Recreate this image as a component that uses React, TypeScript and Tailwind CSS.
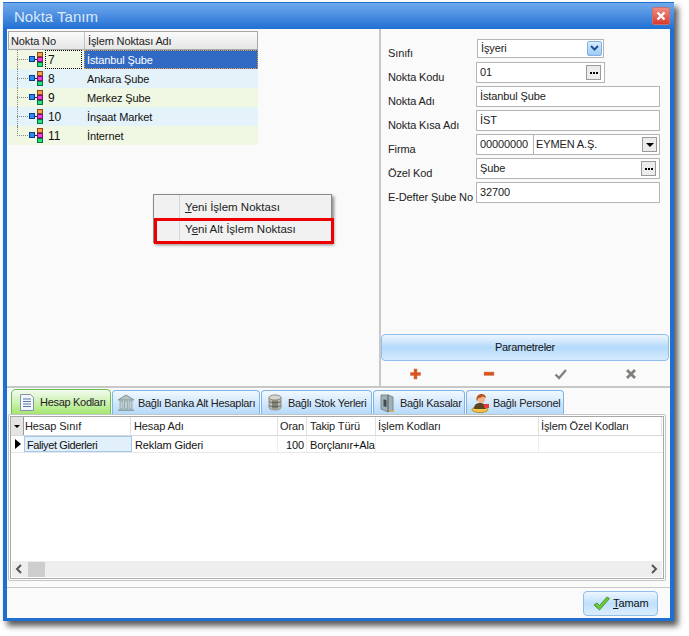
const treeRows = [
  { no: "7", name: "İstanbul Şube", bg: "bg-[#f0f8e3]" },
  { no: "8", name: "Ankara Şube", bg: "bg-[#e4f3fa]" },
  { no: "9", name: "Merkez Şube", bg: "bg-[#f0f8e3]" },
  { no: "10", name: "İnşaat Market", bg: "bg-[#e4f3fa]" },
  { no: "11", name: "İnternet", bg: "bg-[#f0f8e3]" },
];

const gridCols = [
  { label: "Hesap Sınıf", w: "w-[107px] pl-[1px]" },
  { label: "Hesap Adı", w: "w-[147px] pl-[3px]" },
  { label: "Oran", w: "w-[29px] pl-[2px]" },
  { label: "Takip Türü", w: "w-[69px] pl-[3px]" },
  { label: "İşlem Kodları", w: "w-[163px] pl-[2px]" },
  { label: "İşlem Özel Kodları", w: "w-[123px] pl-[2px]" },
];

const NodeIcon = () => (
  <svg width="14" height="15" viewBox="0 0 14 15" className="shrink-0" shapeRendering="crispEdges">
    <path d="M5 7h3v-4.500h1M8 7h1M8 7v5h1" stroke="#222" fill="none" />
    <rect x="0" y="4" width="6" height="6" fill="#123a80" />
    <rect x="1" y="5" width="4" height="4" fill="#1e90ff" />
    <rect x="8" y="0" width="6" height="5" fill="#8a4a10" />
    <rect x="9" y="1" width="4" height="3" fill="#f8a050" />
    <rect x="8" y="5" width="6" height="5" fill="#801070" />
    <rect x="9" y="6" width="4" height="3" fill="#f03cd8" />
    <rect x="8" y="10" width="6" height="5" fill="#0a7040" />
    <rect x="9" y="11" width="4" height="3" fill="#28e080" />
  </svg>
);

const DotsButton = () => (
  <span className="flex h-[15px] w-[15px] items-center justify-center gap-[1px] border border-[#9a9a9a] bg-[#ececec]">
    <i className="h-[2px] w-[2px] bg-black" />
    <i className="h-[2px] w-[2px] bg-black" />
    <i className="h-[2px] w-[2px] bg-black" />
  </span>
);

const FormRow = ({ label, children }: { label: string; children: React.ReactNode }) => (
  <div className="flex h-[24px] items-start">
    <span className="mt-[8px] w-[88px] shrink-0 whitespace-nowrap text-[#222]">{label}</span>
    {children}
  </div>
);

const Field = ({ value, w = "w-[184px]", right }: { value: string; w?: string; right?: React.ReactNode }) => (
  <div className={`flex h-[21px] ${w} items-center justify-between border border-[#b4b4b4] bg-white pl-[3px] pr-[3px] text-[#222]`}>
    <span className="-mt-[2px]">{value}</span>
    {right}
  </div>
);

const HesapIcon = () => (
  <svg width="18" height="19" viewBox="0 0 18 19" className="shrink-0">
    <path d="M2.500 1.500h10l3 3v13h-13z" fill="#f2f5fa" stroke="#8794a8" />
    <path d="M5 6h8M5 8.500h8M5 11h8M5 13.500h8" stroke="#5a7aa4" />
  </svg>
);

const BankIcon = () => (
  <svg width="18" height="18" viewBox="0 0 18 18" className="shrink-0">
    <path d="M1 6 9 1l8 5z" fill="#b4c4c4" stroke="#7f9292" />
    <path d="M3 7h3v8H3zM7.500 7h3v8h-3zM12 7h3v8h-3z" fill="#c0cfcf" stroke="#869a9a" strokeWidth="0.700" />
    <path d="M1 15.500h16V17H1z" fill="#8ba0a0" />
  </svg>
);

const StockIcon = () => (
  <svg width="16" height="17" viewBox="0 0 16 17" className="shrink-0">
    <path d="M2 3.500v10c0 1.400 2.500 2.500 6 2.500s6-1.100 6-2.500v-10z" fill="#b9bab0" stroke="#8c8d84" />
    <ellipse cx="8" cy="3.500" rx="6" ry="2.500" fill="#d6d7cf" stroke="#8c8d84" />
    <path d="M2 7.500c1 1.500 11 1.500 12 0M2 11.500c1 1.500 11 1.500 12 0" fill="none" stroke="#6c6d64" />
    <path d="M5 6.500h6v8H5z" fill="#55574f" opacity="0.550" />
  </svg>
);

const SafeIcon = () => (
  <svg width="16" height="20" viewBox="0 0 16 20" className="shrink-0">
    <path d="M1 2h7l5 2v13l-5 2-7-3z" fill="#9fb0b6" stroke="#7a8b90" />
    <path d="M8 2v17" stroke="#4f5e64" />
    <path d="M3.500 6.500 6.500 7v7l-3-.800z" fill="#3f4c52" />
    <path d="M9 17h5v2H9z" fill="#c8b070" />
  </svg>
);

const PersonIcon = () => (
  <svg width="20" height="20" viewBox="0 0 20 20" className="shrink-0">
    <ellipse cx="9" cy="16.500" rx="8" ry="3" fill="#f3c84a" stroke="#b88a20" />
    <path d="M3 16c0-4 2-6 6-6s5 2 6 6z" fill="#5c4420" />
    <circle cx="10" cy="6" r="4" fill="#f2b48a" />
    <path d="M5.500 8c-.5-5 2-7 5-7s4.500 2 4.500 4l-3-1.500c-2 1.500-4 1.500-4.500 1.500z" fill="#b5561c" />
    <path d="M13 11h5v4h-5z" fill="#e23b3b" />
  </svg>
);

const tabs = [
  { label: "Bağlı Banka Alt Hesapları", w: "w-[148px]", cls: "pl-[4px] gap-[3px]", icon: <BankIcon /> },
  { label: "Bağlı Stok Yerleri", w: "w-[111px]", cls: "pl-[5px] gap-[5px]", icon: <StockIcon /> },
  { label: "Bağlı Kasalar", w: "w-[92px]", cls: "pl-[6px] gap-[4px]", icon: <SafeIcon /> },
  { label: "Bağlı Personel", w: "w-[98px]", cls: "pl-[4px] gap-[2px]", icon: <PersonIcon /> },
];

export default function App() {
  return (
    <div className="h-[636px] w-[689px] overflow-hidden bg-white pl-[3px] pt-[2px] font-['Liberation_Sans',Arial,sans-serif] text-[11px] leading-[14px] tracking-[-0.12px]">
      <div className="relative flex h-[619px] w-[671px] flex-col border-x-[4px] border-b-[3px] border-[#1f6fd0] bg-[#fafafa] shadow-[4px_5px_6px_rgba(0,0,0,0.65)]">
        {/* Title */}
        <div className="-mx-[4px] flex h-[27px] shrink-0 items-center justify-between border-t border-[#1f6fd0] bg-gradient-to-b from-[#6fa9ec] to-[#1f70d4] pl-[11px] pr-[4px]">
          <span className="mt-[1px] text-[15px] tracking-normal text-[#dce9f8]">Nokta Tanım</span>
          <span className="flex h-[18px] w-[18px] items-center justify-center rounded-[2px] border border-[#c9706a] bg-gradient-to-b from-[#f08a80] to-[#d8382c]">
            <svg width="10" height="10" viewBox="0 0 10 10">
              <path d="M1.500 1.500l7 7M8.500 1.500l-7 7" stroke="#fff" strokeWidth="2.400" />
            </svg>
          </span>
        </div>

        {/* Top panels */}
        <div className="flex h-[359px] shrink-0 border-b-[2px] border-[#c8c8c8]">
          <div className="w-[374px] shrink-0 border-r-[2px] border-[#c8c8c8] pl-[1px] pt-[2px]">
            <div className="w-[250px]">
              <div className="flex h-[19px] border border-[#a8a8a8] bg-gradient-to-b from-[#fafafa] to-[#e6e6e6] text-[#222]">
                <span className="w-[76px] border-r border-[#c4c4c4] pl-[2px] pt-[2px]">Nokta No</span>
                <span className="pl-[3px] pt-[2px]">İşlem Noktası Adı</span>
              </div>
              {treeRows.map((row, i) => (
                <div key={row.no} className={`flex h-[19px] ${row.bg} text-[#111]`}>
                  <div className="relative flex w-[76px] shrink-0 items-center">
                    <span className={`absolute left-[9px] top-0 border-l border-dotted border-[#888] ${i === 4 ? "h-[10px]" : "h-[19px]"}`} />
                    <span className="absolute left-[9px] top-[9px] w-[11px] border-t border-dotted border-[#888]" />
                    <span className="ml-[21px]"><NodeIcon /></span>
                    {i === 0 ? (
                      <span className="ml-[2px] flex h-[19px] w-[37px] items-center border border-dotted border-black pl-[2px] text-[12px]">{row.no}</span>
                    ) : (
                      <span className="ml-[5px] text-[12px]">{row.no}</span>
                    )}
                  </div>
                  {i === 0 ? (
                    <div className="flex h-[19px] w-[174px] items-center border border-dotted border-[#e8a040] bg-[#316ac5] pl-[2px] text-white">{row.name}</div>
                  ) : (
                    <div className="flex items-center pl-[3px]">{row.name}</div>
                  )}
                </div>
              ))}
            </div>
          </div>

          <div className="flex min-w-0 flex-1 flex-col pl-[7px] pt-[9px]">
            <div className="flex flex-col">
              <FormRow label="Sınıfı">
                <div className="ml-[1px] mt-[1px] flex h-[19px] w-[127px] items-center justify-between border border-[#b4b4b4] bg-white pl-[3px] pr-[1px] text-[#222]">
                  <span className="-mt-[1px]">İşyeri</span>
                  <span className="flex h-[15px] w-[15px] items-center justify-center rounded-[2px] border border-[#80b0e0] bg-gradient-to-b from-[#d8ecff] to-[#9ccaf6]">
                    <svg width="9" height="7" viewBox="0 0 9 7">
                      <path d="M1 1l3.500 3.500L8 1" stroke="#1c4f96" strokeWidth="2" fill="none" />
                    </svg>
                  </span>
                </div>
              </FormRow>
              <FormRow label="Nokta Kodu"><Field value="01" w="w-[129px]" right={<DotsButton />} /></FormRow>
              <FormRow label="Nokta Adı"><Field value="İstanbul Şube" /></FormRow>
              <FormRow label="Nokta Kısa Adı"><Field value="İST" /></FormRow>
              <FormRow label="Firma">
                <div className="flex h-[21px] w-[184px] border border-[#b4b4b4] bg-white text-[#222]">
                  <span className="w-[57px] border-r border-[#b4b4b4] pl-[3px] pt-[2px]">00000000</span>
                  <span className="flex-1 pl-[2px] pt-[2px]">EYMEN A.Ş.</span>
                  <span className="mr-[2px] mt-[2px] flex h-[15px] w-[15px] items-center justify-center border border-[#9a9a9a] bg-[#ececec]">
                    <i className="h-0 w-0 border-x-[4px] border-t-[4px] border-x-transparent border-t-black" />
                  </span>
                </div>
              </FormRow>
              <FormRow label="Özel Kod"><Field value="Şube" right={<DotsButton />} /></FormRow>
              <FormRow label="E-Defter Şube No"><Field value="32700" /></FormRow>
            </div>

            <div className="-ml-[7px] mt-auto flex h-[27px] w-[288px] items-center justify-center rounded-[4px] border border-[#8fbdec] bg-gradient-to-b from-[#eef6fe] via-[#b4dafc] to-[#d6ebfd] pb-[2px] tracking-[-0.3px] text-[#111]">
              Parametreler
            </div>
            <div className="-ml-[7px] flex h-[25px] w-[288px] items-center">
              <svg width="12" height="12" viewBox="0 0 12 12" className="ml-[28px]">
                <path d="M5 1h3v3.500h3.500v3H8V11H5V7.500H1.500v-3H5z" fill="#e2501a" stroke="#bf7f4f" strokeWidth="0.500" />
              </svg>
              <svg width="12" height="6" viewBox="0 0 12 6" className="ml-[62px]">
                <path d="M1 1h10v3.500H1z" fill="#e2501a" stroke="#c59070" strokeWidth="0.500" />
              </svg>
              <svg width="13" height="12" viewBox="0 0 13 12" className="ml-[59px]">
                <path d="M1.500 6.500 5 10l7-8" fill="none" stroke="#80807c" strokeWidth="2.400" />
              </svg>
              <svg width="12" height="12" viewBox="0 0 12 12" className="ml-[58px]">
                <path d="M2 2l8 8M10 2l-8 8" fill="none" stroke="#80807c" strokeWidth="2.800" />
              </svg>
            </div>
          </div>
        </div>

        {/* Tabs */}
        <div className="mt-[1px] flex h-[25px] shrink-0 items-end gap-[1px] pl-[4px] tracking-[-0.3px] text-[#222]">
          <div className="flex h-[25px] w-[100px] items-center gap-[4px] rounded-t-[5px] border border-b-0 border-[#6cbf52] bg-gradient-to-b from-[#f4fbf0] to-[#a4e66e] pl-[6px]">
            <HesapIcon />
            <span className="whitespace-nowrap">Hesap Kodları</span>
          </div>
          {tabs.map((t) => (
            <div key={t.label} className={`flex h-[24px] ${t.w} ${t.cls} items-center rounded-t-[4px] border border-b-0 border-[#7fb4e8] bg-gradient-to-b from-[#f2f8fe] to-[#b5dafa]`}>
              {t.icon}
              <span className="whitespace-nowrap">{t.label}</span>
            </div>
          ))}
        </div>

        {/* Grid panel */}
        <div className="ml-[1px] mr-[4px] flex h-[167px] shrink-0 flex-col rounded-[2px] border border-[#c4c4c4] bg-white p-[1px]">
          <div className="flex min-h-0 flex-1 flex-col border border-[#a8a8a8] bg-white text-[#222]">
            <div className="flex h-[19px] shrink-0 border-b border-[#d8d8d8]">
              <span className="flex w-[13px] shrink-0 items-center justify-center border-r border-[#999] bg-[#e4e4e4]">
                <i className="h-0 w-0 border-x-[3px] border-t-[3px] border-x-transparent border-t-black" />
              </span>
              {gridCols.map((c) => (
                <span key={c.label} className={`${c.w} shrink-0 overflow-hidden whitespace-nowrap border-r border-[#e0e0e0] pt-[2px]`}>{c.label}</span>
              ))}
            </div>
            <div className="flex h-[17px] shrink-0 border-b border-[#e8e8e8] text-[#111]">
              <span className="flex w-[13px] shrink-0 items-center justify-center">
                <i className="h-0 w-0 border-y-[5px] border-l-[6px] border-y-transparent border-l-black" />
              </span>
              <span className="w-[108px] shrink-0 border border-[#a4c8ec] bg-[#e2f0fc] pl-[2px] pt-[1px] tracking-[-0.4px]">Faliyet Giderleri</span>
              <span className="w-[146px] shrink-0 border-r border-[#eeeeee] pl-[3px] pt-[2px]">Reklam Gideri</span>
              <span className="w-[29px] shrink-0 border-r border-[#eeeeee] pr-[2px] pt-[2px] text-right">100</span>
              <span className="w-[69px] shrink-0 overflow-hidden whitespace-nowrap border-r border-[#eeeeee] pl-[3px] pt-[2px]">Borçlanır+Alacaklı</span>
              <span className="w-[163px] shrink-0 border-r border-[#eeeeee]" />
              <span className="w-[123px] shrink-0" />
            </div>
            <div className="flex-1" />
            <div className="mx-[1px] mb-[1px] flex h-[16px] items-center justify-between bg-[#eeeeee] pr-[3px]">
              <div className="flex h-[16px] items-center">
                <svg width="16" height="10" viewBox="0 0 16 10">
                  <path d="M9 1 5 5l4 4" stroke="#555" strokeWidth="2" fill="none" />
                </svg>
                <span className="h-[15px] w-[17px] bg-[#cdcdcd]" />
              </div>
              <svg width="10" height="10" viewBox="0 0 10 10">
                <path d="M3 1l4 4-4 4" stroke="#555" strokeWidth="2" fill="none" />
              </svg>
            </div>
          </div>
        </div>

        {/* Footer */}
        <div className="mt-[6px] flex flex-1 items-center justify-end border-t border-[#c8c8c8] pr-[12px]">
          <div className="flex h-[25px] w-[75px] items-center gap-[3px] rounded-[4px] border border-[#8fbdec] bg-gradient-to-b from-[#eef6fe] via-[#bfe0fc] to-[#dcedfd] pl-[9px] text-[#111]">
            <svg width="17" height="15" viewBox="0 0 17 15">
              <path d="M1 9l3-2 2.500 2.500L14 1l2.500 1.500L6.500 14z" fill="#6cc83c" stroke="#3a8a20" strokeWidth="0.800" />
            </svg>
            <span><span className="underline">T</span>amam</span>
          </div>
        </div>

        {/* Context menu */}
        <div className="absolute left-[146px] top-[192px] w-[179px] border border-[#8a8a8a] bg-[#f1f1f1] text-[11.5px] tracking-normal text-[#222] shadow-[2px_2px_3px_rgba(0,0,0,0.45)]">
          <div className="flex h-[24px]">
            <span className="w-[26px] border-r border-[#d4d4d4]" />
            <span className="pl-[5px] pt-[5px]"><span className="underline">Y</span>eni İşlem Noktası</span>
          </div>
          <div className="flex h-[23px]">
            <span className="w-[26px] border-r border-[#d4d4d4]" />
            <span className="pl-[5px] pt-[3px]">Y<span className="underline">e</span>ni Alt İşlem Noktası</span>
          </div>
        </div>
        <div className="absolute left-[147px] top-[216px] h-[26px] w-[180px] border-[3px] border-[#ee0000]" />
      </div>
    </div>
  );
}
